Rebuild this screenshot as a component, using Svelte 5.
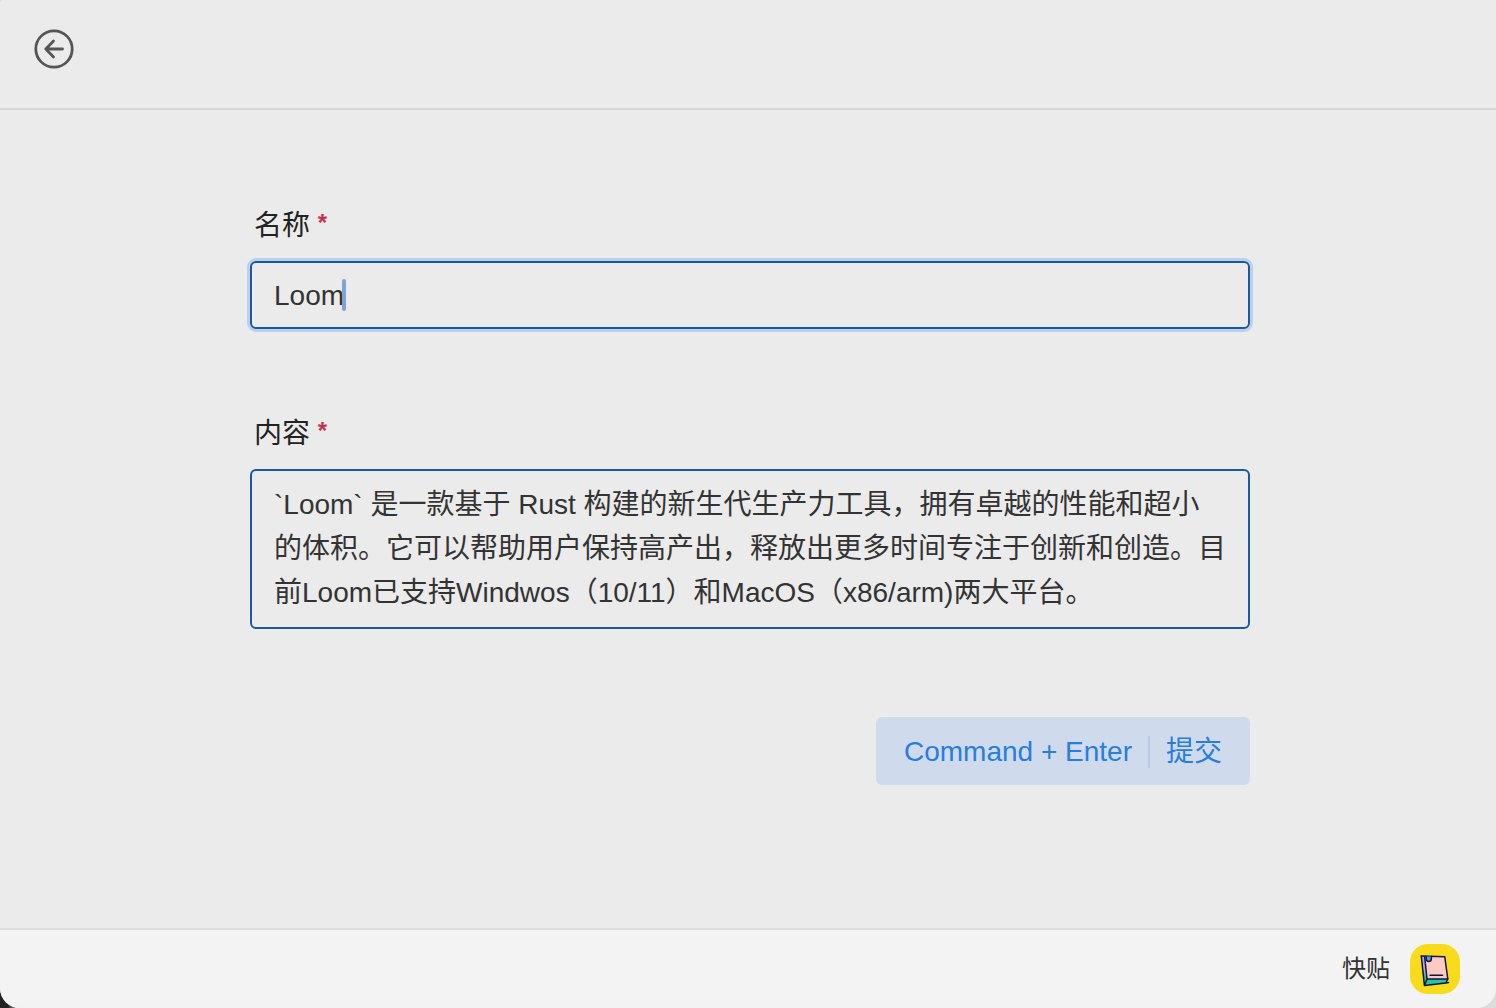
<script>
  let name = 'Loom';
  let content = '`Loom` 是一款基于 Rust 构建的新生代生产力工具，拥有卓越的性能和超小的体积。它可以帮助用户保持高产出，释放出更多时间专注于创新和创造。目前Loom已支持Windwos（10/11）和MacOS（x86/arm)两大平台。';

  function submit(e) {
    e.preventDefault();
  }

  function onKeydown(e) {
    if (e.metaKey && e.key === 'Enter') submit(e);
  }
</script>

<svelte:window on:keydown={onKeydown} />

<div class="window">
  <header>
    <button class="back" type="button" aria-label="返回">
      <svg viewBox="0 0 40 40" width="40" height="40" fill="none" stroke="#555" stroke-width="2.8" stroke-linecap="round" stroke-linejoin="round">
        <circle cx="20" cy="20" r="18.2" />
        <path d="M28.5 20H11.8M19.5 12L11.8 20l7.7 8" />
      </svg>
    </button>
  </header>

  <main>
    <form on:submit={submit}>
      <div class="field">
        <label for="name">名称 <span class="required">*</span></label>
        <div class="input-wrap">
          <input id="name" class="focused" type="text" bind:value={name} required />
          <span class="caret"></span>
        </div>
      </div>
      <div class="field">
        <label for="content">内容 <span class="required">*</span></label>
        <textarea id="content" bind:value={content} required></textarea>
      </div>
      <button class="submit" type="submit">
        <span>Command + Enter</span>
        <span class="divider"></span>
        <span>提交</span>
      </button>
    </form>
  </main>

  <footer>
    <span>快贴</span>
    <svg viewBox="0 0 50 50" width="50" height="50">
      <rect width="50" height="50" rx="18" fill="#f8dc1c" />
      <path d="M11.3 12L14.4 41.5 35.8 39l2-4L17 35 14.6 12z" fill="#1fc7a8" />
      <path d="M11.3 12L12.700 25 17 35 14.600 12z" fill="#b9a3e6" />
      <path d="M14.600 12L34.800 12.800 37.800 35 17 35z" fill="#fdc9c3" />
      <g fill="none" stroke="#14143c" stroke-width="1.5" stroke-linejoin="round" stroke-linecap="round">
        <path d="M11.3 12L34.800 12.800 37.800 35 17 35 14.600 12.200" />
        <path d="M11.3 12L14.4 41.5 35.800 39l2-4M17 35l-2.600 6.500M35.800 39l2.800-.6" />
        <path d="M20 31.300h12.500" />
        <path d="M16.200 12.500v2.300a2.600 2.600 0 0 0 5.200 0v-2.300" fill="#4a9fe8" />
      </g>
    </svg>
  </footer>
</div>

<style>
  :global(body) {
    margin: 0;
    background: linear-gradient(to right, #222 0, #222 8px, #dcdcdc 20px) bottom / 100% 40px no-repeat #dcdcdc;
  }
  .window {
    display: flex;
    flex-direction: column;
    min-height: 100vh;
    border-radius: 4px 0 20px 20px;
    overflow: hidden;
    background: #ebebeb;
    color: #333;
    font-family: "Liberation Sans", "Noto Sans CJK SC", sans-serif;
    font-size: 28px;
    line-height: 44px;
  }
  header {
    box-sizing: border-box;
    height: 110px;
    padding: 29px 34px;
    border-bottom: 2px solid #d6d6d6;
  }
  .back {
    display: block;
    padding: 0;
    border: none;
    background: none;
    cursor: pointer;
  }
  .back svg {
    display: block;
  }
  main {
    flex: 1;
    padding: 94px 246px 92px 250px;
  }
  form {
    display: flex;
    flex-direction: column;
  }
  .field {
    display: flex;
    flex-direction: column;
    gap: 13px;
    margin-bottom: 83px;
  }
  label {
    padding-left: 4px;
    color: #222;
  }
  .required {
    color: #c9304f;
    font-size: 24px;
    font-weight: bold;
    line-height: 24px;
    vertical-align: 4px;
  }
  .input-wrap {
    position: relative;
  }
  input,
  textarea {
    display: block;
    box-sizing: border-box;
    width: 100%;
    margin: 0;
    border: 2px solid #185a9d;
    border-radius: 6px;
    outline: none;
    background: transparent;
    color: inherit;
    font: inherit;
    caret-color: transparent;
  }
  input {
    height: 68px;
    padding: 11px 22px 9px;
  }
  .focused {
    box-shadow: 0 0 0 3px #bcd0ea;
  }
  textarea {
    height: 160px;
    padding: 12px 22px;
    resize: none;
    overflow: hidden;
  }
  .caret {
    position: absolute;
    top: 18px;
    left: 92px;
    width: 4px;
    height: 32px;
    border-radius: 2px;
    background: #7fa3d3;
  }
  .submit {
    display: flex;
    align-items: center;
    align-self: flex-end;
    gap: 16px;
    height: 68px;
    margin-top: 5px;
    padding: 2px 28px 0;
    border: none;
    border-radius: 6px;
    background: #cfdbed;
    color: #277de0;
    font: inherit;
    cursor: pointer;
  }
  .divider {
    width: 2px;
    height: 32px;
    background: #b8cbe6;
  }
  footer {
    box-sizing: border-box;
    display: flex;
    align-items: center;
    justify-content: flex-end;
    gap: 20px;
    height: 80px;
    padding: 0 36px;
    border-top: 2px solid #dcdcdc;
    background: #f3f3f3;
    font-size: 24px;
  }
</style>
